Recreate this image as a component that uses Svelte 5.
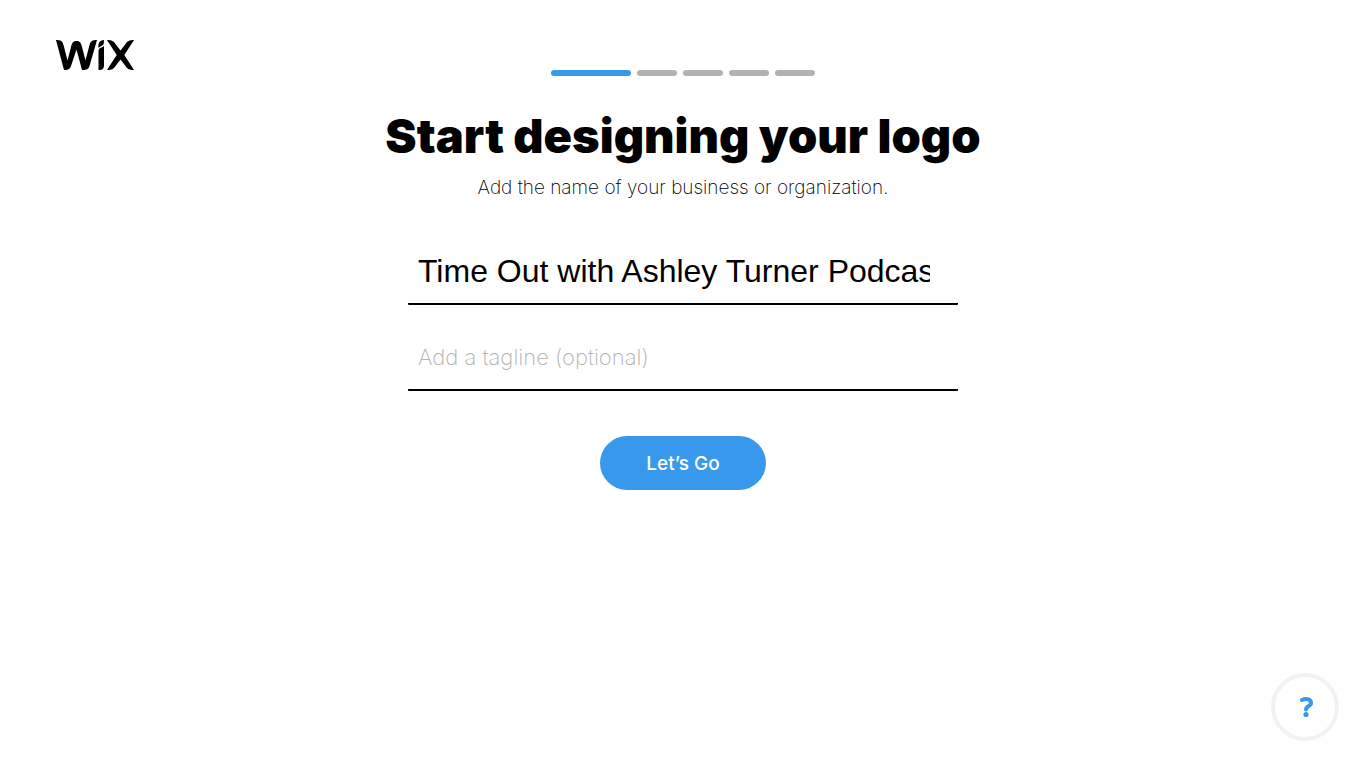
<script>
  let name = $state("Time Out with Ashley Turner Podcast");
  let tagline = $state("");

  const steps = 5;
  const current = 0;
</script>

<svelte:head>
  <title>Start designing your logo</title>
</svelte:head>

<div class="page">
  <header>
    <a class="logo" href="/" aria-label="Wix">
      <svg viewBox="0 0 78 30" width="78" height="30" aria-hidden="true">
        <path
          d="M0 0C5 0 6.500 1 7.500 5L11.500 20.500L15 7C16 2.500 17.500 1 20.500 1C23.500 1 25 2.500 26 7L29.500 20.500L33.500 5C34.500 1 36.500 0 41 0L33.500 26C32.500 29 31 30 26 30L20.500 9.500L15 26C14 29 12.500 30 8 30Z"
        />
        <path d="M48 0C48 4 47.500 5 45.500 6C44 6.800 43 7 42.500 8C42 2.500 43.500 0.500 48 0Z" />
        <path d="M48 5.500V25C48 29 46.500 29.800 42.500 30V11C42.500 9 43.500 8.300 45.500 7.500C47 7 47.500 6.500 48 5.500Z" />
        <path
          d="M51 0C56 0 57.500 1 59.500 4L64.500 10.500L69.500 4C71.500 1 73 0 78 0L68.300 15L78 30C73 30 71.500 29 69.500 26L64.500 19.500L59.500 26C57.500 29 56 30 51 30L60.700 15Z"
        />
      </svg>
    </a>
  </header>

  <main>
    <div class="progress" role="progressbar" aria-label="Progress" aria-valuemin="1" aria-valuemax={steps} aria-valuenow={current + 1}>
      {#each Array(steps) as _, i}
        <span class="step" class:active={i === current}></span>
      {/each}
    </div>

    <h1>Start designing your logo</h1>
    <p>Add the name of your business or organization.</p>

    <form onsubmit={(e) => e.preventDefault()}>
      <div class="field">
        <input class="name" type="text" aria-label="Business name" bind:value={name} />
      </div>
      <div class="field">
        <input class="tagline" type="text" aria-label="Tagline" placeholder="Add a tagline (optional)" bind:value={tagline} />
      </div>
      <button class="submit" type="submit">Let’s Go</button>
    </form>
  </main>

  <button class="help" type="button" aria-label="Help">
    <svg viewBox="0 0 16 22" width="16" height="22" aria-hidden="true">
      <path d="M5 4C8 2.500 14 2.500 14 7C14 10.500 9 10 9 13.500" />
      <circle cx="9" cy="18.500" r="2.600" />
    </svg>
  </button>
</div>

<style>
  :global(body) {
    margin: 0;
    background: #fff;
  }

  .page {
    min-height: 100vh;
    box-sizing: border-box;
    padding-top: 40px;
    color: #000;
    font-family: "Liberation Sans", Arial, sans-serif;
  }

  header {
    display: flex;
    height: 30px;
    padding: 0 56px;
  }

  .logo {
    display: block;
    height: 30px;
    color: #000;
  }

  .logo svg {
    display: block;
    fill: currentColor;
  }

  main {
    display: flex;
    flex-direction: column;
    align-items: center;
  }

  .progress {
    display: flex;
    gap: 6px;
  }

  .step {
    width: 40px;
    height: 6px;
    border-radius: 3px;
    background: #b2b2b2;
  }

  .step.active {
    width: 80px;
    background: #3899ec;
  }

  h1 {
    margin: 32px 0 0;
    font-family: Inter, "Liberation Sans", sans-serif;
    font-size: 47px;
    font-weight: 900;
    line-height: 56px;
    text-align: center;
  }

  p {
    margin: 12px 0 0;
    font-family: Inter, "Liberation Sans", sans-serif;
    font-size: 19px;
    font-weight: 200;
    line-height: 24px;
    text-align: center;
  }

  form {
    display: flex;
    flex-direction: column;
    align-items: center;
    gap: 20px;
    width: 100%;
    max-width: 550px;
    margin-top: 39px;
  }

  .field {
    width: 100%;
    box-sizing: border-box;
    padding: 0 28px 0 10px;
    border-bottom: 2px solid #000;
    border-radius: 1px;
  }

  input {
    display: block;
    width: 100%;
    height: 64px;
    padding: 0;
    border: 0;
    outline: 0;
    background: transparent;
    color: #000;
    font-family: inherit;
  }

  .name {
    font-size: 32px;
  }

  .tagline {
    font-family: Inter, "Liberation Sans", sans-serif;
    font-size: 22px;
    font-weight: 200;
  }

  .tagline::placeholder {
    color: #b2b2b2;
    opacity: 1;
  }

  .submit {
    min-width: 166px;
    height: 54px;
    margin-top: 25px;
    padding: 0 40px;
    border: 0;
    border-radius: 27px;
    background: #3899ec;
    color: #fff;
    font-family: Inter, "Liberation Sans", sans-serif;
    font-size: 19px;
    font-weight: 500;
    cursor: pointer;
  }

  .help {
    position: fixed;
    right: 27px;
    bottom: 27px;
    display: flex;
    align-items: center;
    justify-content: center;
    width: 68px;
    height: 68px;
    padding: 0;
    border: 4px solid #f2f2f2;
    border-radius: 50%;
    background: #fff;
    cursor: pointer;
  }

  .help path {
    fill: none;
    stroke: #3899ec;
    stroke-width: 4;
    stroke-linecap: round;
  }

  .help circle {
    fill: #3899ec;
  }
</style>
